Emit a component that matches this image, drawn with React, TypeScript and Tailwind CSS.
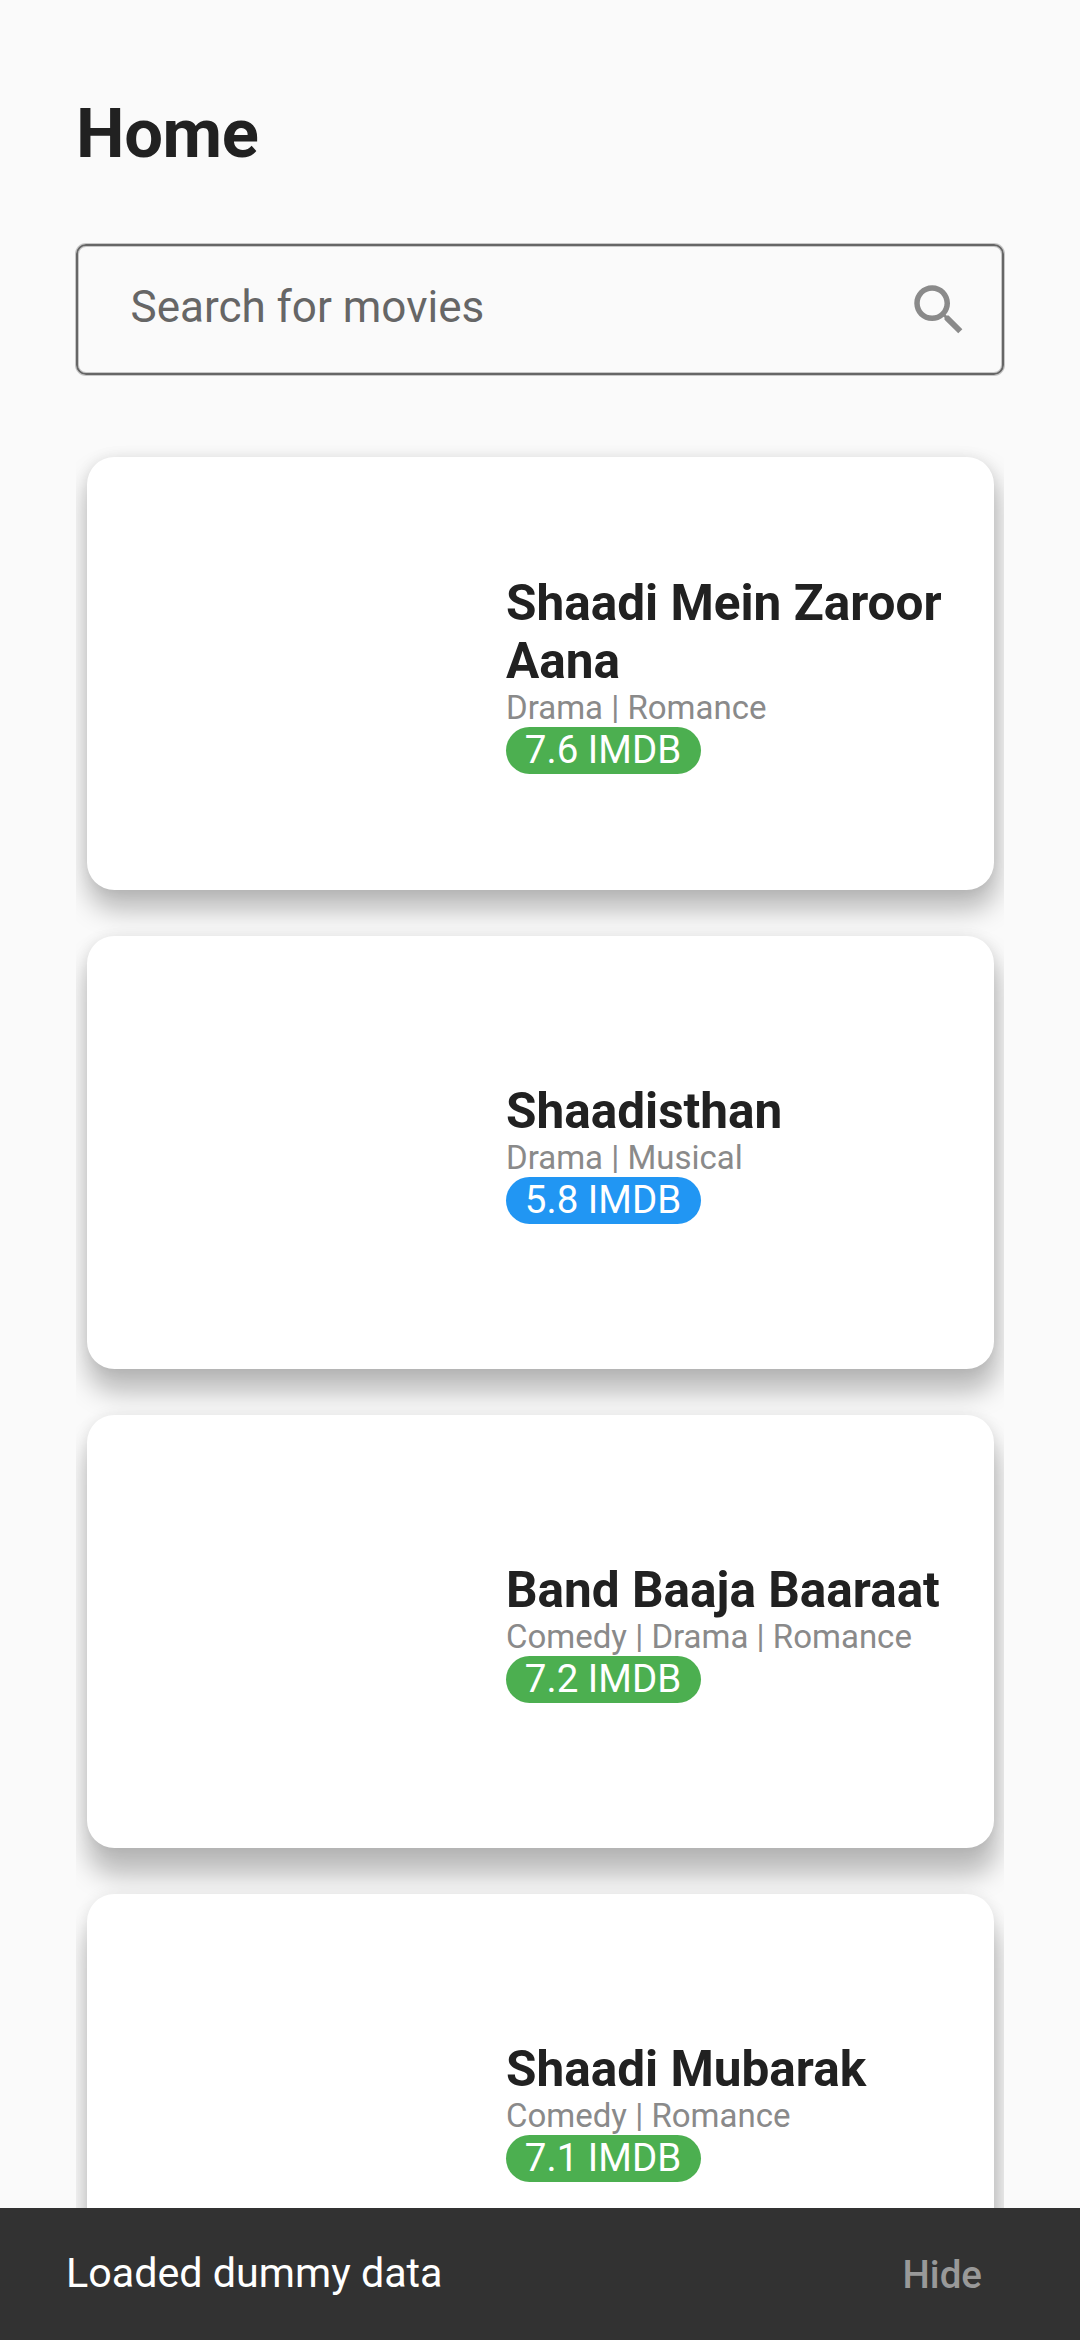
const movies = [
  {
    title: 'Shaadi Mein Zaroor Aana',
    genre: 'Drama | Romance',
    score: '7.6 IMDB',
    color: 'bg-[#4caf50]',
    shadow: 'shadow-[2px_18px_27px_2px_rgba(0,0,0,0.26),0_0_14px_rgba(0,0,0,0.08)]',
  },
  {
    title: 'Shaadisthan',
    genre: 'Drama | Musical',
    score: '5.8 IMDB',
    color: 'bg-[#2196f3]',
    shadow: 'shadow-[2px_21px_27px_2px_rgba(0,0,0,0.26),0_0_14px_rgba(0,0,0,0.08)]',
  },
  {
    title: 'Band Baaja Baaraat',
    genre: 'Comedy | Drama | Romance',
    score: '7.2 IMDB',
    color: 'bg-[#4caf50]',
    shadow: 'shadow-[2px_25px_27px_2px_rgba(0,0,0,0.26),0_0_14px_rgba(0,0,0,0.08)]',
  },
  {
    title: 'Shaadi Mubarak',
    genre: 'Comedy | Romance',
    score: '7.1 IMDB',
    color: 'bg-[#4caf50]',
    shadow: 'shadow-[2px_29px_27px_2px_rgba(0,0,0,0.26),0_0_14px_rgba(0,0,0,0.08)]',
  },
];

export default function App() {
  return (
    <div className="flex h-[2340px] w-[1080px] flex-col overflow-hidden bg-[#fafafa] font-['Roboto',sans-serif] text-[#212121]">
      <header className="px-[76px] pt-[93px]">
        <h1 className="text-[68.75px] leading-[81px] font-bold tracking-[-0.4px]">Home</h1>
        <div className="mt-[70px] flex h-[131px] items-center justify-between rounded-[10px] border-2 border-[#666666] pr-[30px] pl-[52.5px] shadow-[0_0_0_1px_rgba(102,102,102,0.35),inset_0_0_0_1px_rgba(102,102,102,0.35)]">
          <span className="pb-[5px] text-[44px] leading-[52px] text-[#666666]">Search for movies</span>
          <svg className="size-[66px]" viewBox="0 0 24 24" fill="#8a8a8a">
            <path d="M15.5 14h-.79l-.28-.27C15.41 12.59 16 11.11 16 9.5 16 5.91 13.09 3 9.5 3S3 5.91 3 9.5 5.91 16 9.5 16c1.61 0 3.09-.59 4.23-1.57l.27.28v.79l5 4.99L20.49 19l-4.99-5zm-6 0C7.01 14 5 11.99 5 9.5S7.01 5 9.5 5 14 7.01 14 9.5 11.99 14 9.5 14z" />
          </svg>
        </div>
      </header>
      <main className="mx-[76px] mt-[49px] flex min-h-0 flex-1 flex-col gap-[46px] overflow-hidden pt-[33px] pr-[10.5px] pl-[10.5px]">
        {movies.map((m) => (
          <article key={m.title} className={`flex h-[433px] shrink-0 items-center rounded-[27.5px] bg-white pr-[40px] pl-[419.5px] ${m.shadow}`}>
            <div className="flex flex-col items-start">
              <h2 className="-mb-px pt-px text-[49.5px] leading-[58px] font-bold">{m.title}</h2>
              <p className="text-[33px] leading-[38.5px] text-[#8a8a8a]">{m.genre}</p>
              <span className={`flex h-[47px] w-[195px] items-start justify-center rounded-full pr-px text-[38.5px] leading-[45px] text-white ${m.color}`}>{m.score}</span>
            </div>
          </article>
        ))}
      </main>
      <footer className="flex h-[132px] shrink-0 items-center justify-between bg-[#323232] pr-[98px] pl-[66px]">
        <span className="text-[41.25px] text-white">Loaded dummy data</span>
        <button className="pt-px text-[38.5px] font-medium text-[#999999]">Hide</button>
      </footer>
    </div>
  );
}
